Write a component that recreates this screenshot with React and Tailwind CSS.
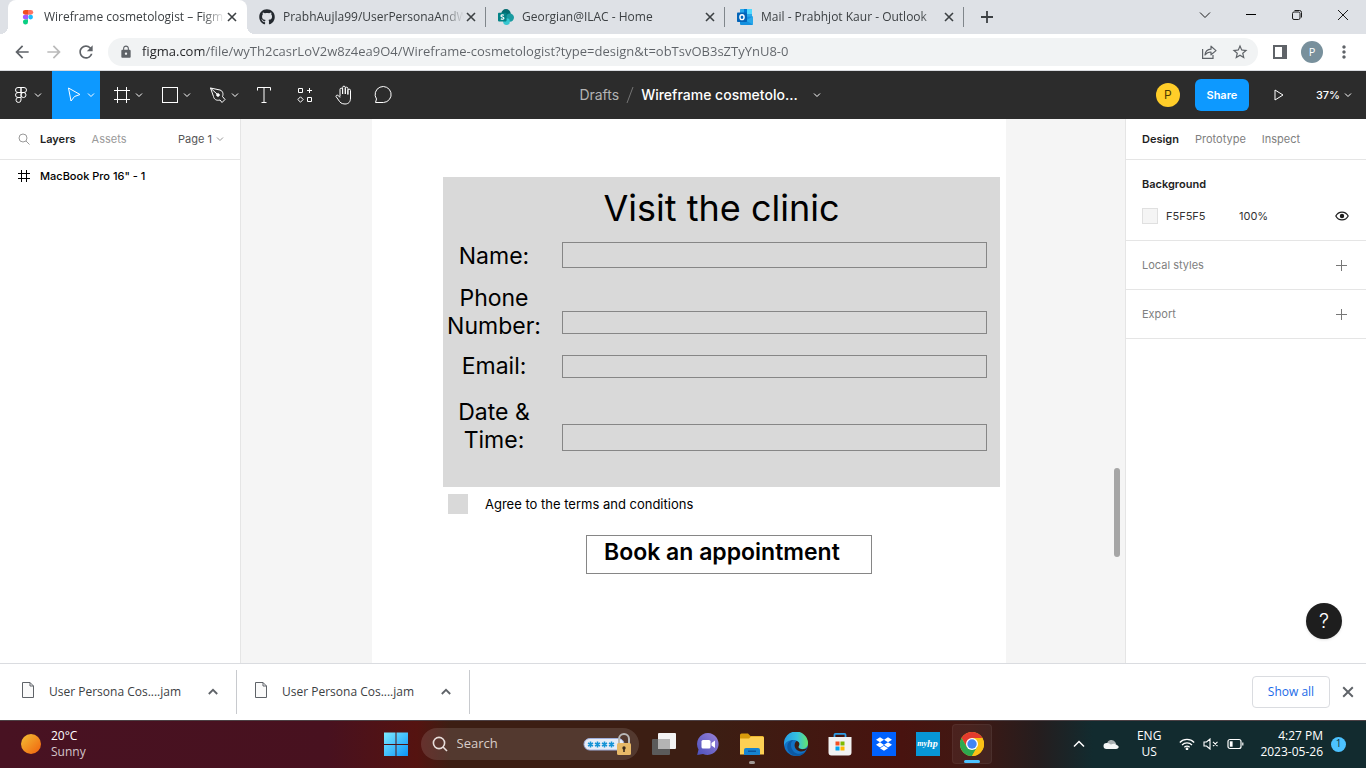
import React from "react";
import {
  MdArrowBack,
  MdArrowForward,
  MdRefresh,
  MdLock,
  MdStarBorder,
  MdMoreVert,
} from "react-icons/md";
import { FaGithub, FaDropbox } from "react-icons/fa";

const UI = "font-['Segoe_UI','Open_Sans','Noto_Sans',sans-serif]";
const INTER = "font-['Inter','Liberation_Sans',sans-serif]";

/* ---------- small glyphs ---------- */

function Chevron({ className = "" }) {
  return (
    <svg viewBox="0 0 8 8" className={`h-2 w-2 shrink-0 ${className}`} fill="none" stroke="currentColor">
      <path d="M1 2.500 4 5.500 7 2.500" />
    </svg>
  );
}

function Cross({ className = "h-2.5 w-2.5" }) {
  return (
    <svg viewBox="0 0 10 10" className={className} fill="none" stroke="currentColor" strokeWidth="1.600">
      <path d="M1 1 9 9M9 1 1 9" />
    </svg>
  );
}

function FigmaColor() {
  return (
    <svg viewBox="0 0 16 16" className="h-4 w-4 shrink-0">
      <path d="M5.200.9H8v4.800H5.200a2.400 2.400 0 0 1 0-4.800Z" fill="#f24e1e" />
      <path d="M8 .9h2.800a2.400 2.400 0 0 1 0 4.800H8Z" fill="#ff7262" />
      <path d="M5.200 5.700H8v4.800H5.200a2.400 2.400 0 0 1 0-4.800Z" fill="#a259ff" />
      <circle cx="10.600" cy="8.100" r="2.400" fill="#1abcfe" />
      <path d="M5.200 10.500H8v2.300a2.500 2.500 0 1 1-2.800-2.300Z" fill="#0acf83" />
    </svg>
  );
}

function SharePointIcon() {
  return (
    <svg viewBox="0 0 16 16" className="h-4 w-4 shrink-0">
      <circle cx="8" cy="4.700" r="4.700" fill="#036c70" />
      <circle cx="11.800" cy="8.600" r="4.200" fill="#1a9ba1" />
      <circle cx="8.500" cy="12.600" r="3.400" fill="#37c6d0" />
      <rect x="0" y="3.800" width="8.600" height="8.600" rx=".8" fill="#038387" />
      <path d="M5.900 6.300c-1-.6-2.900-.5-2.900.6 0 1.300 2.900.900 2.900 2.300 0 1.200-1.900 1.300-3.100.6" fill="none" stroke="#fff" strokeWidth="1.200" />
    </svg>
  );
}

function OutlookIcon() {
  return (
    <svg viewBox="0 0 16 16" className="h-4 w-4 shrink-0">
      <rect x="3" y="0" width="12" height="9" rx=".6" fill="#28a8ea" />
      <rect x="7" y="0" width="4" height="4" fill="#0078d4" />
      <rect x="10" y="0" width="5" height="5" fill="#50d9ff" />
      <path d="M3 8 16 7.500V15a1 1 0 0 1-1 1H4a1 1 0 0 1-1-1Z" fill="#1490df" />
      <path d="M16 7.600V15.600L8.500 11.500Z" fill="#28a8ea" />
      <rect x="0" y="3.500" width="10" height="9.500" rx=".8" fill="#0364b8" />
      <ellipse cx="5" cy="8.200" rx="2.100" ry="2.400" fill="none" stroke="#fff" strokeWidth="1.400" />
    </svg>
  );
}

/* ---------- browser chrome ---------- */

const tabs = [
  { title: "Wireframe cosmetologist – Figma", icon: <FigmaColor />, active: true },
  { title: "PrabhAujla99/UserPersonaAndWi", icon: <FaGithub className="h-4 w-4 shrink-0 text-[#24292f]" /> },
  { title: "Georgian@ILAC - Home", icon: <SharePointIcon /> },
  { title: "Mail - Prabhjot Kaur - Outlook", icon: <OutlookIcon /> },
];

function TabStrip() {
  return (
    <header className="flex h-[34px] items-stretch bg-[#dee1e6] pl-2">
      {tabs.map((t, i) => (
        <div
          key={t.title}
          className={`relative flex w-[239px] min-w-0 items-center pr-2.5 pl-3 ${t.active ? "rounded-t-lg bg-white" : ""}`}
        >
          {t.active && (
            <>
              <span className="absolute bottom-0 -left-2 h-2 w-2 bg-[radial-gradient(circle_at_0_0,#dee1e6_8px,#fff_8px)]" />
              <span className="absolute -right-2 bottom-0 h-2 w-2 bg-[radial-gradient(circle_at_100%_0,#dee1e6_8px,#fff_8px)]" />
            </>
          )}
          <button type="button" className="flex min-w-0 flex-1 items-center gap-2 text-left text-xs text-[#3c4043]">
            {t.icon}
            <span className="flex-1 overflow-hidden whitespace-nowrap [mask-image:linear-gradient(90deg,#000_88%,transparent)]">
              {t.title}
            </span>
          </button>
          <button type="button" aria-label={`Close ${t.title}`} className="ml-0.5 text-[#3c4043]">
            <Cross />
          </button>
          {i > 0 && <span className="absolute right-0 h-5 w-px bg-[#80868b]" />}
        </div>
      ))}
      <button type="button" aria-label="New tab" className="ml-[17px] text-[#3c4043]">
        <svg viewBox="0 0 12 12" className="h-3 w-3" stroke="currentColor" strokeWidth="1.800">
          <path d="M6 0v12M0 6h12" />
        </svg>
      </button>
      <div className="ml-auto flex items-stretch pb-[5px] text-[#1b1b1b]">
        <button type="button" aria-label="Search tabs" className="flex w-[46px] items-center justify-center">
          <svg viewBox="0 0 12 12" className="h-3 w-3" fill="none" stroke="currentColor"><path d="M1 3.500 6 8.500 11 3.500" /></svg>
        </button>
        <button type="button" aria-label="Minimize" className="flex w-[46px] items-center justify-center">
          <span className="h-px w-2.5 bg-black" />
        </button>
        <button type="button" aria-label="Restore" className="flex w-[46px] items-center justify-center">
          <svg viewBox="0 0 12 12" className="h-3 w-3" fill="none" stroke="currentColor">
            <rect x="1.500" y="3" width="7.500" height="7.500" rx="1.500" />
            <path d="M3.500 1.500H8.500a2 2 0 0 1 2 2V8.500" />
          </svg>
        </button>
        <button type="button" aria-label="Close window" className="flex w-[46px] items-center justify-center">
          <svg viewBox="0 0 12 12" className="h-3 w-3" stroke="currentColor"><path d="M1 1 11 11M11 1 1 11" /></svg>
        </button>
      </div>
    </header>
  );
}

function AddressBar() {
  return (
    <div className="flex h-[37px] items-center border-b border-[#dadce0] bg-white pr-3 pl-3 text-[#5f6368]">
      <button type="button" aria-label="Back"><MdArrowBack className="h-5 w-5" /></button>
      <button type="button" aria-label="Forward" className="ml-3 text-[#bababa]"><MdArrowForward className="h-5 w-5" /></button>
      <button type="button" aria-label="Reload" className="ml-3"><MdRefresh className="h-5 w-5" /></button>
      <div className="ml-3 flex h-7 flex-1 items-center rounded-full bg-[#f1f3f4] pr-[9px] pl-[11px]">
        <MdLock className="h-[14px] w-[14px] shrink-0" />
        <input
          type="text"
          aria-label="Address"
          defaultValue="figma.com/file/wyTh2casrLoV2w8z4ea9O4/Wireframe-cosmetologist?type=design&t=obTsvOB3sZTyYnU8-0"
          className="ml-[9px] min-w-0 flex-1 bg-[linear-gradient(90deg,#202124_62px,#5f6368_62px)] bg-clip-text text-[13px] text-transparent outline-none"
        />
        <button type="button" aria-label="Share page">
          <svg viewBox="0 0 16 16" className="h-4 w-4" fill="none" stroke="currentColor" strokeWidth="1.200">
            <path d="M1.600 5V14.400H12V11" />
            <path d="M4 11C4.300 7.500 6.500 5.300 10 5.200V2.200L15 6.600 10 10.800V8C7.500 8 5.500 9 4 11Z" strokeLinejoin="round" />
          </svg>
        </button>
        <button type="button" aria-label="Bookmark" className="ml-[14px]"><MdStarBorder className="h-[18px] w-[18px]" /></button>
      </div>
      <button type="button" aria-label="Side panel" className="ml-[15px]">
        <svg viewBox="0 0 14 14" className="h-[14px] w-[14px]">
          <rect width="14" height="14" fill="currentColor" />
          <rect x="2" y="2" width="7" height="10" fill="#fff" />
        </svg>
      </button>
      <button type="button" aria-label="Profile" className="ml-[14px] flex h-[22px] w-[22px] items-center justify-center rounded-full bg-[#78909c] text-[11px] text-white">
        P
      </button>
      <button type="button" aria-label="Menu" className="ml-[11px]"><MdMoreVert className="h-5 w-5" /></button>
    </div>
  );
}

/* ---------- editor toolbar ---------- */

function ToolButton({ label, active, arrow, width, pad = "", children }) {
  return (
    <button
      type="button"
      aria-label={label}
      className={`flex h-12 items-center justify-center ${arrow ? "gap-[3px]" : ""} ${pad} ${width} ${active ? "bg-[#0d99ff]" : ""}`}
    >
      <svg viewBox="0 0 20 20" className="h-5 w-5 shrink-0" fill="none" stroke="currentColor">{children}</svg>
      {arrow && <Chevron />}
    </button>
  );
}

function EditorToolbar() {
  return (
    <div className={`flex h-12 items-center bg-[#2c2c2c] text-white ${INTER}`}>
      <div className="flex flex-1 items-center">
        <ToolButton label="Main menu" arrow width="w-[52px]">
          <path d="M7 2.500H10V7.500H7a2.500 2.500 0 0 1 0-5ZM10 2.500h3a2.500 2.500 0 0 1 0 5h-3ZM7 7.500H10V12.500H7a2.500 2.500 0 0 1 0-5ZM7 12.500H10V15a2.500 2.500 0 1 1-3-2.500Z" />
          <circle cx="12.500" cy="10" r="2.500" />
        </ToolButton>
        <ToolButton label="Move" arrow active pad="pl-1.5" width="w-12">
          <path d="M4.500 3 16 9.500 10.500 11.500 7 16Z" strokeLinejoin="round" />
        </ToolButton>
        <ToolButton label="Frame" arrow pad="pl-1.5" width="w-12">
          <path d="M5.500 2v16M14.500 2v16M2 5.500h16M2 14.500h16" />
        </ToolButton>
        <ToolButton label="Rectangle" arrow pad="pl-1.5" width="w-12">
          <rect x="2.500" y="2.500" width="15" height="15" />
        </ToolButton>
        <ToolButton label="Pen" arrow pad="pl-1.5" width="w-12">
          <path d="M2.500 3 12 5C15 6 15.500 9 14.500 11.500L17 14.500 14 17.500 12 15C8 16 6 14 5.500 11.500ZM2.500 3 9 9" strokeLinejoin="round" />
          <circle cx="10" cy="10" r="1.300" fill="currentColor" />
        </ToolButton>
        <ToolButton label="Text" width="w-[39px]">
          <path d="M3.500 5.500V2.500H16.500V5.500M10 2.500v15M7.500 17.500h5" />
        </ToolButton>
        <ToolButton label="Resources" pad="pl-0.5" width="w-[41px]">
          <path d="M3.500 3.500h4v4h-4ZM12.500 12.500h4v4h-4ZM14.500 3v5M12 5.500h5M5.500 11.800 8.200 14.500 5.500 17.200 2.800 14.500Z" />
        </ToolButton>
        <ToolButton label="Hand" width="w-10">
          <path d="M6 11.500V4.500a1.300 1.300 0 0 1 2.600 0V9 2.500a1.300 1.300 0 0 1 2.700 0V9 3.500a1.300 1.300 0 0 1 2.600 0V9.500 5.500a1.300 1.300 0 0 1 2.600 0V13c0 4-2 6-5.500 6-3.500 0-5-1.500-6.500-4L2 11.500c0-1.500 1.500-1.700 2.500-.8L6 12.500" strokeLinejoin="round" />
        </ToolButton>
        <ToolButton label="Comment" width="w-[38px]">
          <path d="M2.500 17.500 3.500 14A8 8 0 1 1 10.500 17.500Z" strokeLinejoin="round" />
        </ToolButton>
      </div>
      <div className="flex items-center pl-12 text-sm">
        <a href="#drafts" className="text-[#b3b3b3]">Drafts</a>
        <svg viewBox="0 0 8 16" className="mx-[7px] h-4 w-2" stroke="#757575"><path d="M1 16 7 0" /></svg>
        <button type="button" className="flex items-center font-medium">
          Wireframe cosmetolo...
          <Chevron className="ml-[15px]" />
        </button>
      </div>
      <div className="flex flex-1 items-center justify-end pr-[14px]">
        <button type="button" aria-label="Account" className="h-6 w-6 rounded-full bg-[#ffcd29] text-xs text-[#4d3a00]">P</button>
        <button type="button" className="ml-[15px] h-8 w-[54px] rounded-md bg-[#0d99ff] text-[11px] font-semibold">Share</button>
        <button type="button" aria-label="Present" className="ml-[25px]">
          <svg viewBox="0 0 10 12" className="h-3 w-2.5" fill="none" stroke="currentColor"><path d="M1 1 9 6 1 11Z" /></svg>
        </button>
        <button type="button" className="ml-8 flex items-center gap-1 text-[11px] font-medium">
          37%
          <Chevron />
        </button>
      </div>
    </div>
  );
}

/* ---------- editor panels ---------- */

function LayersPanel() {
  return (
    <aside className={`w-[241px] shrink-0 border-r border-[#e5e5e5] bg-white text-[11px] ${INTER}`}>
      <div className="flex h-[41px] items-center border-b border-[#e5e5e5] pr-4 pl-[18px]">
        <svg viewBox="0 0 12 12" className="h-3 w-3" fill="none" stroke="#9a9a9a"><circle cx="5" cy="5" r="4" /><path d="m8 8 3.500 3.500" /></svg>
        <button type="button" className="ml-[10px] font-semibold text-[#1e1e1e]">Layers</button>
        <button type="button" className="ml-4 text-[#9a9a9a]">Assets</button>
        <button type="button" className="ml-auto flex items-center gap-1 text-[#555]">
          Page 1
          <Chevron className="text-[#999]" />
        </button>
      </div>
      <button type="button" className="flex h-8 w-full items-center gap-[10px] pl-[18px] text-left font-medium text-black">
        <svg viewBox="0 0 12 12" className="h-3 w-3" stroke="currentColor"><path d="M3.500 0v12M8.500 0v12M0 3.500h12M0 8.500h12" /></svg>
        MacBook Pro 16" - 1
      </button>
    </aside>
  );
}

function Plus() {
  return (
    <svg viewBox="0 0 11 11" className="h-[11px] w-[11px]" stroke="#777"><path d="M5.500 0v11M0 5.500h11" /></svg>
  );
}

function DesignPanel() {
  return (
    <aside className={`w-[241px] shrink-0 border-l border-[#e5e5e5] bg-white text-[11px] ${INTER}`}>
      <div className="flex h-[41px] items-center gap-4 border-b border-[#e5e5e5] px-4 text-[#808080]">
        <button type="button" className="font-semibold text-[#1e1e1e]">Design</button>
        <button type="button">Prototype</button>
        <button type="button">Inspect</button>
      </div>
      <section className="h-[81px] border-b border-[#e5e5e5] pt-4 pr-[17px] pl-4">
        <h2 className="leading-4 font-semibold text-[#1e1e1e]">Background</h2>
        <div className="mt-4 flex h-4 items-center text-[#333]">
          <span className="h-4 w-4 border border-[#e0e0e0] bg-[#f5f5f5]" />
          <input aria-label="Background colour" defaultValue="F5F5F5" className="ml-2 w-[73px] outline-none" />
          <input aria-label="Opacity" defaultValue="100%" className="w-12 outline-none" />
          <button type="button" aria-label="Toggle visibility" className="ml-auto">
            <svg viewBox="0 0 14 10" className="h-2.5 w-[14px]" fill="none" stroke="#1e1e1e" strokeWidth="1.200">
              <path d="M.8 5C3.500-.2 10.500-.2 13.200 5 10.500 10.200 3.500 10.200.8 5Z" />
              <circle cx="7" cy="5" r="1.600" fill="#1e1e1e" />
            </svg>
          </button>
        </div>
      </section>
      {["Local styles", "Export"].map((name) => (
        <section key={name} className="flex h-[49px] items-center justify-between border-b border-[#e5e5e5] pr-[19px] pl-4 text-[#808080]">
          <h2>{name}</h2>
          <button type="button" aria-label={`Add ${name}`}><Plus /></button>
        </section>
      ))}
    </aside>
  );
}

/* ---------- canvas ---------- */

const fields = [
  { id: "name", label: ["Name:"], row: "items-start", box: "h-[26px]" },
  { id: "phone", label: ["Phone", "Number:"], row: "mt-[14px] items-end", box: "mb-1.5 h-[23px]" },
  { id: "email", label: ["Email:"], row: "mt-3 items-end", box: "mb-0.5 h-[23px]" },
  { id: "date", label: ["Date &", "Time:"], row: "mt-[18px] items-end", box: "mb-[3px] h-[27px]" },
];

function Canvas() {
  return (
    <main className={`relative flex min-w-0 flex-1 bg-[#f5f5f5] pr-[119px] pl-[131px] text-black ${INTER}`}>
      <form className="flex-1 bg-white pt-[58px] pr-1.5 pl-[71px]" onSubmit={(e) => e.preventDefault()}>
        <div className="h-[310px] bg-[#d9d9d9]">
          <h1 className="h-[65px] pt-2 text-center text-4xl leading-[46px]">Visit the clinic</h1>
          {fields.map((f) => (
            <div key={f.id} className={`flex gap-[17px] pr-[13px] ${f.row}`}>
              <label htmlFor={f.id} className="w-[102px] shrink-0 text-center text-[23px] leading-7">
                {f.label.map((l) => (
                  <span key={l} className="block">{l}</span>
                ))}
              </label>
              <input id={f.id} type="text" className={`min-w-0 flex-1 border border-[#868686] bg-transparent px-2 text-sm outline-none ${f.box}`} />
            </div>
          ))}
        </div>
        <div className="mt-[7px] ml-[5px] flex items-center">
          <input id="agree" type="checkbox" className="h-5 w-5 appearance-none bg-[#d9d9d9]" />
          <label htmlFor="agree" className="ml-[17px] text-[13px] leading-5">Agree to the terms and conditions</label>
        </div>
        <button type="submit" className="mt-[21px] ml-[143px] h-[39px] w-[286px] border border-[#868686] pb-1.5 pl-[17px] text-left text-[23px] leading-7 font-semibold">
          Book an appointment
        </button>
      </form>
      <span className="absolute top-[349px] right-[5px] h-[89px] w-1.5 rounded-full bg-[#a6a6a6]" />
    </main>
  );
}

/* ---------- downloads shelf ---------- */

function DownloadsShelf() {
  return (
    <div className="flex h-[57px] items-center border-t border-[#dadce0] bg-white text-[#3c4043]">
      {["first", "second"].map((k, i) => (
        <div key={k} className={`flex h-11 items-center border-r border-[#c8cace] pr-[18px] ${i ? "w-[233px] pl-[18px]" : "w-[237px] pl-[22px]"}`}>
          <button type="button" className="flex flex-1 items-center gap-[15px] text-left text-xs">
            <svg viewBox="0 0 12 16" className="-mt-1 h-4 w-3" fill="#fafafa" stroke="#5f6368">
              <path d="M.5.500H8L11.500 4V15.500H.5ZM8 .500V4h3.500" />
            </svg>
            User Persona Cos....jam
          </button>
          <button type="button" aria-label="Download options">
            <svg viewBox="0 0 10 10" className="h-2.5 w-2.5" fill="none" stroke="#5f6368" strokeWidth="1.800"><path d="M.8 7 5 2.800 9.200 7" /></svg>
          </button>
        </div>
      ))}
      <button type="button" className="ml-auto h-8 w-[78px] rounded border border-[#dadce0] text-xs text-[#1a6ae8]">Show all</button>
      <button type="button" aria-label="Close downloads" className="mx-3 text-[#5f6368]"><Cross className="h-3 w-3" /></button>
    </div>
  );
}

/* ---------- taskbar ---------- */

function TaskIcon({ label, active, dot, children }) {
  return (
    <button
      type="button"
      aria-label={label}
      className={`relative flex h-10 w-10 items-center justify-center rounded ${active ? "border border-white/5 bg-white/5" : ""}`}
    >
      {children}
      {active && <span className="absolute bottom-0 h-[3px] w-4 rounded-full bg-[#4cc2ff]" />}
      {dot && <span className="absolute bottom-0 h-[3px] w-1.5 rounded-full bg-[#a09894]" />}
    </button>
  );
}

function Taskbar() {
  return (
    <footer className="flex h-12 items-center border-t border-[#4d4145] bg-[linear-gradient(90deg,#481222_0%,#48111f_24%,#551310_30.500%,#3c1e13_33%,#3c1e13_52%,#48130f_66%,#401813_71%,#251d1e_76%,#122b2f_80%,#122b2f_100%)] pb-px text-xs text-white">
      <div className="flex flex-1 items-center pl-[21px]">
        <span className="h-5 w-5 rounded-full bg-[linear-gradient(135deg,#f2c035,#f1600d)]" />
        <div className="ml-[10px] leading-4">
          <p>20°C</p>
          <p className="text-[#d4c5ca]">Sunny</p>
        </div>
      </div>

      <div className="flex items-center gap-1">
        <TaskIcon label="Start">
          <svg viewBox="0 0 24 24" className="h-6 w-6">
            <defs>
              <linearGradient id="win" x1="0" y1="0" x2="1" y2="1" gradientUnits="objectBoundingBox">
                <stop offset="0" stopColor="#7ceaff" /><stop offset="1" stopColor="#0a93f8" />
              </linearGradient>
            </defs>
            <path fill="url(#win)" d="M0 .5h11.500V12H0ZM12.500.5H24V12H12.500ZM0 13h11.500v11.500H0ZM12.500 13H24v11.500H12.500Z" />
          </svg>
        </TaskIcon>
        <label className="mx-px flex h-8 w-[218px] items-center rounded-full bg-white/12 pr-2 pl-[11px]">
          <svg viewBox="0 0 16 16" className="h-4 w-4 shrink-0" fill="none" stroke="#e8dedb" strokeWidth="1.600"><circle cx="7" cy="7" r="5.600" /><path d="m11 11 4 4" /></svg>
          <input type="text" aria-label="Search" placeholder="Search" className="ml-[9px] min-w-0 flex-1 text-[13px] outline-none placeholder:text-[#d9cdc9]" />
          <svg viewBox="0 0 48 24" className="h-6 w-12 shrink-0">
            <rect x="1" y="6.500" width="40" height="11.500" rx="5.700" fill="#e6ecf7" stroke="#9fb0dd" />
            <g stroke="#1593d6" strokeWidth="1.500">
              <path d="M7.500 9.500v6M5 11l5 3M5 14l5-3M14.500 9.500v6M12 11l5 3M12 14l5-3M21.500 9.500v6M19 11l5 3M19 14l5-3M28.500 9.500v6M26 11l5 3M26 14l5-3" />
            </g>
            <path d="M36 12V7a5 5 0 0 1 10 0v5" fill="none" stroke="#b9b9b9" strokeWidth="2" />
            <rect x="34" y="11" width="14" height="12" rx="1.500" fill="#e7b968" />
            <circle cx="41" cy="16" r="1.700" fill="#3b2b1c" /><path d="M40.200 16h1.600v4h-1.600Z" fill="#3b2b1c" />
          </svg>
        </label>
        <TaskIcon label="Task view">
          <svg viewBox="0 0 24 24" className="h-6 w-6">
            <rect x="6" y="1" width="18" height="16" rx="1" fill="#f3f3f3" />
            <rect x="0" y="7" width="18" height="16" rx="1" fill="#5b5b5b" />
            <rect x="6" y="7" width="12" height="10" fill="#b4b4b4" />
          </svg>
        </TaskIcon>
        <TaskIcon label="Chat">
          <svg viewBox="0 0 24 24" className="h-6 w-6">
            <defs><linearGradient id="chat" x1="0" y1="1" x2="1" y2="0"><stop offset="0" stopColor="#4b50bc" /><stop offset="1" stopColor="#9a83d8" /></linearGradient></defs>
            <path d="M12 1A11 11 0 1 1 7 22L1.200 23 2.500 17.500A11 11 0 0 1 12 1Z" fill="url(#chat)" />
            <rect x="5.500" y="8" width="9" height="8.500" rx="1.500" fill="#fff" /><path d="m15.500 11 3.500-2.500V16l-3.500-2.500Z" fill="#fff" />
          </svg>
        </TaskIcon>
        <TaskIcon label="File Explorer" dot>
          <svg viewBox="0 0 24 24" className="h-6 w-6">
            <path d="M0 3a1.500 1.500 0 0 1 1.500-1.500H8L10.500 4H22.500A1.500 1.500 0 0 1 24 5.500V10H0Z" fill="#d99b0b" />
            <path d="M0 6.500H9L11 4.500H22.500A1.500 1.500 0 0 1 24 6V22.500H0Z" fill="#fdd054" />
            <path d="M4 23v-5a2 2 0 0 1 2-2H18a2 2 0 0 1 2 2v5Z" fill="#1683d0" /><path d="M8 18.500h8v1.500H8Z" fill="#0b559c" />
          </svg>
        </TaskIcon>
        <TaskIcon label="Edge">
          <svg viewBox="0 0 24 24" className="h-6 w-6">
            <defs><linearGradient id="edge" x1="0" y1="0" x2="1" y2="0"><stop offset="0" stopColor="#259be4" /><stop offset=".55" stopColor="#35c1df" /><stop offset="1" stopColor="#66e46a" /></linearGradient></defs>
            <circle cx="12" cy="12" r="12" fill="#1372c5" />
            <path d="M0 12A12 12 0 0 1 24 11c0 4-3 6-6 6-2.500 0-4.500-1-3.500-2.500C16.500 11 14 8 9.500 8 5 8 1 10 0 14Z" fill="url(#edge)" />
            <path d="M9.500 8C6 10 6 16 10 20c3 2.500 8 2.500 12-1-3 5-8 5.500-12 4.500-6-2-8-8-6-12C5 9.500 7 8.200 9.500 8Z" fill="#0c59a4" />
            <path d="M14.500 14.500c2-3 .3-5-2-5.500-3.500 3-2 9 3 10.200 3 .6 5-.2 7-1.700L23.500 16C20 18 14 17.500 14.500 14.500Z" fill="#3c1e13" />
          </svg>
        </TaskIcon>
        <TaskIcon label="Microsoft Store">
          <svg viewBox="0 0 24 24" className="h-6 w-6">
            <path d="M6.500 6V2.800a1 1 0 0 1 1-1h9a1 1 0 0 1 1 1V6" fill="none" stroke="#2f9fe8" strokeWidth="1.800" />
            <path d="M.5 5h23V20.500a3 3 0 0 1-3 3H3.500a3 3 0 0 1-3-3Z" fill="#f2f2f2" />
            <path d="M7.500 9.500h4v4h-4Z" fill="#f25022" /><path d="M12.500 9.500h4v4h-4Z" fill="#7fba00" />
            <path d="M7.500 14.500h4v4h-4Z" fill="#00a4ef" /><path d="M12.500 14.500h4v4h-4Z" fill="#ffb900" />
          </svg>
        </TaskIcon>
        <TaskIcon label="Dropbox">
          <span className="flex h-6 w-6 items-center justify-center bg-[#0061fe]"><FaDropbox className="h-4 w-4" /></span>
        </TaskIcon>
        <TaskIcon label="myHP">
          <span className="flex h-6 w-6 items-center justify-center bg-[#0796d6] font-['Liberation_Serif',serif] text-[10px] font-bold italic">
            <span className="text-[8px]">my</span>hp
          </span>
        </TaskIcon>
        <TaskIcon label="Chrome" active>
          <svg viewBox="0 0 24 24" className="h-6 w-6">
            <circle cx="12" cy="12" r="12" fill="#fbc116" />
            <path d="M1.600 6A12 12 0 0 1 22.400 6H12L6.800 15Z" fill="#e33b2e" />
            <path d="M1.600 6A12 12 0 0 0 12 24l5.200-9H6.800Z" fill="#2da94f" />
            <path d="M12 24l5.200-9L16 6h6.400A12 12 0 0 1 12 24Z" fill="#fbc116" />
            <circle cx="12" cy="12" r="6" fill="#fff" /><circle cx="12" cy="12" r="4.700" fill="#4285f4" />
          </svg>
        </TaskIcon>
      </div>

      <div className="flex flex-1 items-center justify-end pr-5">
        <button type="button" aria-label="Hidden icons">
          <svg viewBox="0 0 12 12" className="h-3 w-3" fill="none" stroke="#fff" strokeWidth="1.500"><path d="M1 8.500 6 3.500 11 8.500" /></svg>
        </button>
        <svg viewBox="0 0 16 12" className="ml-[18px] h-3 w-4">
          <path d="M4 6a4.500 4.500 0 0 1 8.500-1.500L14 8H3Z" fill="#a9b0b2" />
          <path d="M3.500 11a3 3 0 0 1 0-6C6 4.500 7 6 8 6.500 10 5.500 12 5 13 7c3-.3 4 4 0 4Z" fill="#f4f6f6" />
        </svg>
        <div className="ml-[18px] text-center leading-4"><p>ENG</p><p>US</p></div>
        <svg viewBox="0 0 16 12" className="ml-[18px] h-3 w-4" fill="none" stroke="#fff" strokeWidth="1.200">
          <path d="M.8 4.500a10 10 0 0 1 14.400 0M3 7a7 7 0 0 1 10 0M5.300 9.300a4 4 0 0 1 5.400 0" /><circle cx="8" cy="10.800" r=".8" fill="#fff" />
        </svg>
        <svg viewBox="0 0 16 12" className="ml-2 h-3 w-4" fill="none" stroke="#fff" strokeWidth="1.100">
          <path d="M1 4h2.500L7 1v10L3.500 8H1ZM10 3.800 14.500 8.200M14.500 3.800 10 8.200" />
        </svg>
        <svg viewBox="0 0 17 12" className="ml-2 h-3 w-[17px]" fill="none" stroke="#fff" strokeWidth="1.200">
          <rect x="1" y="1.500" width="13" height="9" rx="2" /><path d="M15.800 4.500v3" /><rect x="2.800" y="3.300" width="2.800" height="5.400" fill="#fff" stroke="none" />
        </svg>
        <div className="ml-4 text-right leading-4"><p>4:27 PM</p><p>2023-05-26</p></div>
        <span className="ml-2 flex h-[15px] w-[15px] items-center justify-center rounded-full bg-[#4cc2ff] text-[10px] text-[#12303c]">1</span>
      </div>
    </footer>
  );
}

export default function App() {
  return (
    <div className={`flex min-h-screen flex-col bg-white ${UI}`}>
      <TabStrip />
      <AddressBar />
      <EditorToolbar />
      <div className="relative flex flex-1">
        <LayersPanel />
        <Canvas />
        <DesignPanel />
        <button type="button" aria-label="Help" className={`absolute right-6 bottom-6 h-9 w-9 rounded-full bg-[#1e1e1e] text-xl leading-none font-light text-white shadow ${INTER}`}>
          ?
        </button>
      </div>
      <DownloadsShelf />
      <Taskbar />
    </div>
  );
}
